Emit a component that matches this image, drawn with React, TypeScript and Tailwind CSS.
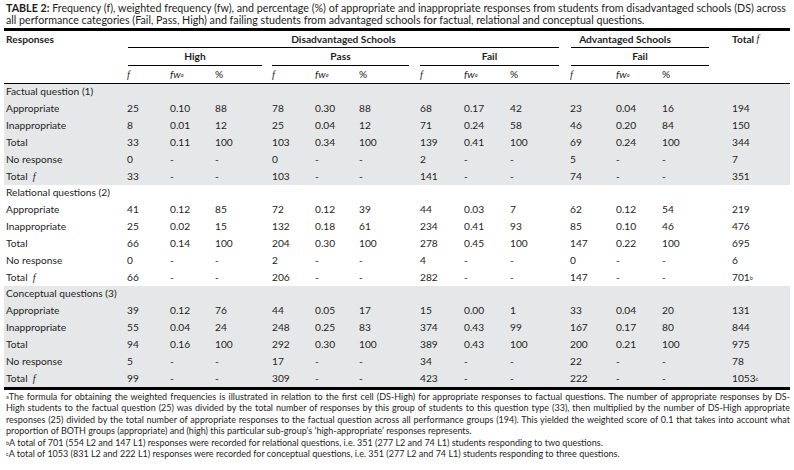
import React from "react";

type Row = string[];

interface Section {
  title: string;
  grey: boolean;
  rows: Row[];
  totalSup: string;
}

const cols =
  "grid grid-cols-[121px_43px_45px_57px_43px_44px_61px_44px_46px_60px_46px_46px_70px_60px]";

const sections: Section[] = [
  {
    title: "Factual question (1)",
    grey: true,
    totalSup: "",
    rows: [
      ["Appropriate", "25", "0.10", "88", "78", "0.30", "88", "68", "0.17", "42", "23", "0.04", "16", "194"],
      ["Inappropriate", "8", "0.01", "12", "25", "0.04", "12", "71", "0.24", "58", "46", "0.20", "84", "150"],
      ["Total", "33", "0.11", "100", "103", "0.34", "100", "139", "0.41", "100", "69", "0.24", "100", "344"],
      ["No response", "0", "-", "-", "0", "-", "-", "2", "-", "-", "5", "-", "-", "7"],
      ["Total f", "33", "-", "-", "103", "-", "-", "141", "-", "-", "74", "-", "-", "351"],
    ],
  },
  {
    title: "Relational questions (2)",
    grey: false,
    totalSup: "b",
    rows: [
      ["Appropriate", "41", "0.12", "85", "72", "0.12", "39", "44", "0.03", "7", "62", "0.12", "54", "219"],
      ["Inappropriate", "25", "0.02", "15", "132", "0.18", "61", "234", "0.41", "93", "85", "0.10", "46", "476"],
      ["Total", "66", "0.14", "100", "204", "0.30", "100", "278", "0.45", "100", "147", "0.22", "100", "695"],
      ["No response", "0", "-", "-", "2", "-", "-", "4", "-", "-", "0", "-", "-", "6"],
      ["Total f", "66", "-", "-", "206", "-", "-", "282", "-", "-", "147", "-", "-", "701"],
    ],
  },
  {
    title: "Conceptual questions (3)",
    grey: true,
    totalSup: "c",
    rows: [
      ["Appropriate", "39", "0.12", "76", "44", "0.05", "17", "15", "0.00", "1", "33", "0.04", "20", "131"],
      ["Inappropriate", "55", "0.04", "24", "248", "0.25", "83", "374", "0.43", "99", "167", "0.17", "80", "844"],
      ["Total", "94", "0.16", "100", "292", "0.30", "100", "389", "0.43", "100", "200", "0.21", "100", "975"],
      ["No response", "5", "-", "-", "17", "-", "-", "34", "-", "-", "22", "-", "-", "78"],
      ["Total f", "99", "-", "-", "309", "-", "-", "423", "-", "-", "222", "-", "-", "1053"],
    ],
  },
];

const Sup = ({ children }: { children: React.ReactNode }) => (
  <sup className="text-[5.5px] relative -top-[1px]">{children}</sup>
);

const SubHead = () => (
  <>
    <div className="italic [font-family:'Liberation_Serif',serif]">f</div>
    <div className="italic">
      fw<Sup>a</Sup>
    </div>
    <div>%</div>
  </>
);

const App = () => {
  return (
    <div className="w-[794px] h-[470px] bg-white px-[4px] pt-[2px] text-[#1e1e1c] text-[10.2px] [font-family:Lato,sans-serif]">
      {/* Title */}
      <div className="pl-[2px] pr-[4px] text-[10.7px] leading-[12px]">
        <div className="whitespace-nowrap [text-align-last:justify]">
          <span className="font-bold">TABLE 2:</span> Frequency (f), weighted frequency (fw), and percentage (%) of
          appropriate and inappropriate responses from students from disadvantaged schools (DS) across
        </div>
        <div className="whitespace-nowrap">
          all performance categories (Fail, Pass, High) and failing students from advantaged schools for factual,
          relational and conceptual questions.
        </div>
      </div>

      <div className="mt-[2px] border-t-[3px] border-black" />

      {/* Header */}
      <div className={`${cols} font-bold leading-none`}>
        <div className="h-[17px] pl-[2px] flex items-center">Responses</div>
        <div className="col-span-9 ml-[3px] mr-[9px] h-[17px] border-b border-black flex items-center justify-center">
          Disadvantaged Schools
        </div>
        <div className="col-span-3 ml-[3px] mr-[21px] h-[17px] border-b border-black flex items-center justify-center pr-[30px]">
          Advantaged Schools
        </div>
        <div className="h-[17px] pl-[2px] flex items-center">
          Total&nbsp;<span className="italic font-normal [font-family:'Liberation_Serif',serif]">f</span>
        </div>

        <div className="h-[18px]" />
        <div className="col-span-3 ml-[3px] mr-[8px] h-[18px] border-b border-black flex items-center justify-center">
          High
        </div>
        <div className="col-span-3 ml-[2px] mr-[9px] h-[18px] border-b border-black flex items-center justify-center">
          Pass
        </div>
        <div className="col-span-3 ml-[2px] mr-[9px] h-[18px] border-b border-black flex items-center justify-center">
          Fail
        </div>
        <div className="col-span-3 ml-[3px] mr-[21px] h-[18px] border-b border-black flex items-center justify-center">
          Fail
        </div>
        <div className="h-[18px]" />
      </div>

      <div className={`${cols} h-[18px] items-center border-b border-black [&>div]:pl-[2px]`}>
        <div />
        <SubHead />
        <SubHead />
        <SubHead />
        <SubHead />
        <div />
      </div>

      {/* Body */}
      {sections.map((section) => (
        <div key={section.title} className={section.grey ? "bg-[#e6e7e8]" : "bg-white"}>
          <div className="h-[16px] pl-[2px] flex items-center">{section.title}</div>
          {section.rows.map((row, i) => (
            <div key={i} className={`${cols} h-[17px] items-center [&>div]:pl-[2px]`}>
              {row.map((cell, j) => {
                if (j === 0 && cell === "Total f") {
                  return (
                    <div key={j}>
                      Total&nbsp;&nbsp;<span className="italic [font-family:'Liberation_Serif',serif]">f</span>
                    </div>
                  );
                }
                if (j === 13 && i === 4 && section.totalSup) {
                  return (
                    <div key={j}>
                      {cell}
                      <Sup>{section.totalSup}</Sup>
                    </div>
                  );
                }
                return <div key={j}>{cell}</div>;
              })}
            </div>
          ))}
        </div>
      ))}

      <div className="border-t-[3px] border-black" />

      {/* Footnotes */}
      <div className="pl-[2px] pr-0 text-[9px] leading-[11.4px] mt-[1px]">
        <div className="whitespace-nowrap [text-align-last:justify]">
          <Sup>a</Sup>The formula for obtaining the weighted frequencies is illustrated in relation to the first cell
          (DS-High) for appropriate responses to factual questions. The number of appropriate responses by DS-
        </div>
        <div className="whitespace-nowrap [text-align-last:justify]">
          High students to the factual question (25) was divided by the total number of responses by this group of
          students to this question type (33), then multiplied by the number of DS-High appropriate
        </div>
        <div className="whitespace-nowrap [text-align-last:justify]">
          responses (25) divided by the total number of appropriate responses to the factual question across all
          performance groups (194). This yielded the weighted score of 0.1 that takes into account what
        </div>
        <div className="whitespace-nowrap">
          proportion of BOTH groups (appropriate) and (high) this particular sub-group’s ‘high-appropriate’ responses
          represents.
        </div>
        <div className="whitespace-nowrap">
          <Sup>b</Sup>A total of 701 (554 L2 and 147 L1) responses were recorded for relational questions, i.e. 351
          (277 L2 and 74 L1) students responding to two questions.
        </div>
        <div className="whitespace-nowrap">
          <Sup>c</Sup>A total of 1053 (831 L2 and 222 L1) responses were recorded for conceptual questions, i.e. 351
          (277 L2 and 74 L1) students responding to three questions.
        </div>
      </div>
    </div>
  );
};

export default App;
